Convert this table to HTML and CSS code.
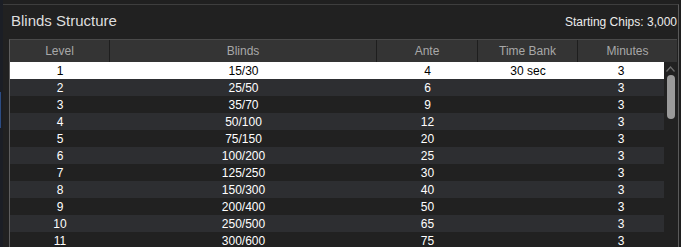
FILE: index.html
```html
<!DOCTYPE html>
<html>
<head>
<meta charset="utf-8">
<link rel="stylesheet" href="styles.css">
</head>
<body>
<div class="page">
  <div class="side"><div class="side-mark"></div></div>
  <div class="panel">
    <div class="head">
      <div class="title">Blinds Structure</div>
      <div class="chips">Starting Chips: 3,000</div>
    </div>
    <div class="table">
      <div class="thead">
        <div class="th">Level</div>
        <div class="th">Blinds</div>
        <div class="th">Ante</div>
        <div class="th">Time Bank</div>
        <div class="th last">Minutes</div>
      </div>
      <div class="tbody">
        <div class="rows">
          <div class="row sel"><div>1</div><div>15/30</div><div>4</div><div>30 sec</div><div>3</div></div>
          <div class="row alt"><div>2</div><div>25/50</div><div>6</div><div></div><div>3</div></div>
          <div class="row"><div>3</div><div>35/70</div><div>9</div><div></div><div>3</div></div>
          <div class="row alt"><div>4</div><div>50/100</div><div>12</div><div></div><div>3</div></div>
          <div class="row"><div>5</div><div>75/150</div><div>20</div><div></div><div>3</div></div>
          <div class="row alt"><div>6</div><div>100/200</div><div>25</div><div></div><div>3</div></div>
          <div class="row"><div>7</div><div>125/250</div><div>30</div><div></div><div>3</div></div>
          <div class="row alt"><div>8</div><div>150/300</div><div>40</div><div></div><div>3</div></div>
          <div class="row"><div>9</div><div>200/400</div><div>50</div><div></div><div>3</div></div>
          <div class="row alt"><div>10</div><div>250/500</div><div>65</div><div></div><div>3</div></div>
          <div class="row"><div>11</div><div>300/600</div><div>75</div><div></div><div>3</div></div>
        </div>
        <div class="scroll">
          <svg class="arrow" width="9" height="6" viewBox="0 0 9 6"><path d="M0.5 5.5 L4.5 1 L8.5 5.5" fill="none" stroke="#6e6e6e" stroke-width="1.2"/></svg>
          <div class="thumb"></div>
        </div>
      </div>
    </div>
  </div>
  <div class="edge"></div>
</div>
</body>
</html>
```
FILE: styles.css
```css
html, body {
  margin: 0;
  padding: 0;
  background: #202020;
  overflow: hidden;
}
body {
  width: 681px;
  height: 247px;
  font-family: "Liberation Sans", Arial, sans-serif;
}
.page {
  display: flex;
  height: 247px;
}
.side {
  width: 3px;
  background: #1b1e25;
  flex: none;
}
.side-mark {
  margin-top: 92px;
  width: 1px;
  height: 36px;
  background: #2c4c82;
}
.panel {
  width: 676px;
  flex: none;
  margin-top: 4px;
  border-top: 1px solid #3e3e3e;
  border-right: 1px solid #5a5a5a;
  background: #212121;
  padding-left: 6px;
  box-sizing: border-box;
}
.head {
  display: flex;
  justify-content: space-between;
  align-items: baseline;
  height: 34px;
  width: 668px;
  box-sizing: border-box;
  padding: 7px 0 0 2px;
}
.title {
  font-size: 15px;
  color: #dedede;
}
.chips {
  font-size: 12px;
  color: #ececec;
}
.table {
  border-left: 1px solid #5e5e5e;
  border-top: 1px solid #4a4a4a;
  width: 668px;
  box-sizing: border-box;
}
.thead {
  display: grid;
  grid-template-columns: 100px 267px 101px 100px 99px;
  height: 22px;
  background: #343434;
}
.th {
  font-size: 12px;
  line-height: 22px;
  color: #a8a8a8;
  text-align: center;
  border-right: 1px solid #1e1e1e;
}
.th.last {
  border-right: none;
}
.tbody {
  display: flex;
}
.rows {
  width: 654px;
  flex: none;
}
.row {
  display: grid;
  grid-template-columns: 100px 267px 101px 100px 86px;
  height: 17px;
  background: #212121;
  color: #ffffff;
  font-size: 12px;
  line-height: 18px;
  text-align: center;
}
.row.alt {
  background: #2d2e31;
}
.row.sel {
  background: #ffffff;
  color: #000000;
}
.scroll {
  width: 13px;
  flex: none;
  display: flex;
  flex-direction: column;
  align-items: center;
}
.arrow {
  margin-top: 4px;
  display: block;
}
.thumb {
  margin-top: 3px;
  width: 8px;
  height: 44px;
  border-radius: 4px;
  background: #9a9a9a;
}
.edge {
  flex: 1;
  background: #1e1e1e;
}
```
